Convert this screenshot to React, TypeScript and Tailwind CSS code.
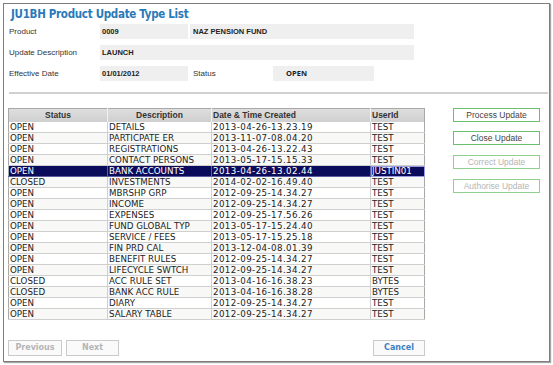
import React from "react";

type Row = { status: string; desc: string; date: string; user: string; selected?: boolean };

const rows: Row[] = [
  { status: "OPEN", desc: "DETAILS", date: "2013-04-26-13.23.19", user: "TEST" },
  { status: "OPEN", desc: "PARTICPATE ER", date: "2013-11-07-08.04.20", user: "TEST" },
  { status: "OPEN", desc: "REGISTRATIONS", date: "2013-04-26-13.22.43", user: "TEST" },
  { status: "OPEN", desc: "CONTACT PERSONS", date: "2013-05-17-15.15.33", user: "TEST" },
  { status: "OPEN", desc: "BANK ACCOUNTS", date: "2013-04-26-13.02.44", user: "JUSTIN01", selected: true },
  { status: "CLOSED", desc: "INVESTMENTS", date: "2014-02-02-16.49.40", user: "TEST" },
  { status: "OPEN", desc: "MBRSHP GRP", date: "2012-09-25-14.34.27", user: "TEST" },
  { status: "OPEN", desc: "INCOME", date: "2012-09-25-14.34.27", user: "TEST" },
  { status: "OPEN", desc: "EXPENSES", date: "2012-09-25-17.56.26", user: "TEST" },
  { status: "OPEN", desc: "FUND GLOBAL TYP", date: "2013-05-17-15.24.40", user: "TEST" },
  { status: "OPEN", desc: "SERVICE / FEES", date: "2013-05-17-15.25.18", user: "TEST" },
  { status: "OPEN", desc: "FIN PRD CAL", date: "2013-12-04-08.01.39", user: "TEST" },
  { status: "OPEN", desc: "BENEFIT RULES", date: "2012-09-25-14.34.27", user: "TEST" },
  { status: "OPEN", desc: "LIFECYCLE SWTCH", date: "2012-09-25-14.34.27", user: "TEST" },
  { status: "CLOSED", desc: "ACC RULE SET", date: "2013-04-16-16.38.23", user: "BYTES" },
  { status: "CLOSED", desc: "BANK ACC RULE", date: "2013-04-16-16.38.28", user: "BYTES" },
  { status: "OPEN", desc: "DIARY", date: "2012-09-25-14.34.27", user: "TEST" },
  { status: "OPEN", desc: "SALARY TABLE", date: "2012-09-25-14.34.27", user: "TEST" },
];

function SideButton({ label, disabled }: { label: string; disabled?: boolean }) {
  return (
    <div
      className={
        "w-[87px] h-[14px] flex items-center justify-center border bg-white font-['Liberation_Sans',sans-serif] text-[8.5px] " +
        (disabled ? "border-[#8fd08f] text-[#b5b5b5]" : "border-[#6cbf6c] text-[#444]")
      }
    >
      {label}
    </div>
  );
}

export default function App() {
  return (
    <div className="w-[553px] h-[365px] bg-white pt-[3px] pl-[3px]">
      <div className="w-[547px] h-[359px] border border-[#7d7d7d] shadow-[1px_1px_1px_rgba(0,0,0,0.35)] flex flex-col">
        {/* Title */}
        <div className="pl-[7px] pt-[2px] h-[18px] leading-[16px] text-[11.5px] font-bold text-[#2a7ab9] font-['DejaVu_Sans',sans-serif] [font-stretch:condensed] tracking-[-0.3px]">
          JU1BH Product Update Type List
        </div>

        {/* Form */}
        <div className="mt-[2px] flex flex-col gap-[6px] font-['Liberation_Sans',sans-serif] text-[8px] text-[#333]">
          <div className="flex h-[15px] items-center">
            <div className="pl-[5px] w-[96px]">Product</div>
            <div className="w-[88px] h-full bg-[#efefef] flex items-center pl-[2px] font-bold text-[7.5px] text-[#222]">0009</div>
            <div className="ml-[2px] w-[224px] h-full bg-[#efefef] flex items-center pl-[3px] font-bold text-[7.5px] text-[#222]">NAZ PENSION FUND</div>
          </div>
          <div className="flex h-[15px] items-center">
            <div className="pl-[5px] w-[96px]">Update Description</div>
            <div className="w-[314px] h-full bg-[#efefef] flex items-center pl-[2px] font-bold text-[7.5px] text-[#222]">LAUNCH</div>
          </div>
          <div className="flex h-[15px] items-center">
            <div className="pl-[5px] w-[96px]">Effective Date</div>
            <div className="w-[88px] h-full bg-[#efefef] flex items-center pl-[2px] font-bold text-[7.5px] text-[#222]">01/01/2012</div>
            <div className="pl-[5px] w-[85px]">Status</div>
            <div className="w-[101px] h-full bg-[#efefef] flex items-center pl-[13px] font-bold text-[7.5px] text-[#222] font-['Open_Sans',sans-serif]">OPEN</div>
          </div>
        </div>

        {/* Separator */}
        <div className="mt-[11px] ml-[5px] mr-[1px] h-[2px] bg-[#d0d0d0]" />

        {/* Main */}
        <div className="mt-[14px] flex">
          <table className="ml-[4px] w-[416px] table-fixed border-collapse border border-[#a8a8a8] font-['DejaVu_Sans',sans-serif] text-[8.7px] text-[#222]">
            <colgroup>
              <col className="w-[99px]" />
              <col className="w-[104px]" />
              <col className="w-[159px]" />
              <col className="w-[54px]" />
            </colgroup>
            <thead>
              <tr className="h-[13px] bg-gradient-to-b from-[#dedede] to-[#cfcfcf] font-['Liberation_Sans',sans-serif] text-[8.5px] font-bold text-[#333]">
                <th className="p-0 text-center border-r border-[#f0f0f0] leading-[12px]">Status</th>
                <th className="p-0 text-center border-r border-[#f0f0f0] leading-[12px]">Description</th>
                <th className="p-0 pl-[1px] text-left border-r border-[#f0f0f0] leading-[12px]">Date &amp; Time Created</th>
                <th className="p-0 pl-[1px] text-left leading-[12px]">UserId</th>
              </tr>
            </thead>
            <tbody>
              {rows.map((r, i) => (
                <tr
                  key={i}
                  className={
                    "h-[11px] " +
                    (r.selected ? "bg-[#0b0b5c] text-white" : i % 2 === 0 ? "bg-white" : "bg-[#f8f8f6]")
                  }
                >
                  <td className={"p-0 pl-[1px] leading-[10px] whitespace-nowrap overflow-hidden border-b border-r " + (r.selected ? "border-[#5c5ca0]" : "border-[#cfcfcf]")}>{r.status}</td>
                  <td className={"p-0 pl-[1px] leading-[10px] whitespace-nowrap overflow-hidden border-b border-r " + (r.selected ? "border-[#5c5ca0]" : "border-[#cfcfcf]")}>{r.desc}</td>
                  <td className={"p-0 pl-[1px] leading-[10px] tracking-[0.4px] whitespace-nowrap overflow-hidden border-b border-r " + (r.selected ? "border-[#5c5ca0]" : "border-[#cfcfcf]")}>{r.date}</td>
                  <td className={"p-0 pl-[1px] leading-[10px] whitespace-nowrap overflow-hidden border-b " + (r.selected ? "border-[#8a8ad0] outline outline-1 outline-[#9a9ae0] -outline-offset-1" : "border-[#cfcfcf]")}>{r.user}</td>
                </tr>
              ))}
            </tbody>
          </table>

          <div className="ml-[28px] flex flex-col">
            <SideButton label="Process Update" />
            <div className="mt-[9px]">
              <SideButton label="Close Update" />
            </div>
            <div className="mt-[10px]">
              <SideButton label="Correct Update" disabled />
            </div>
            <div className="mt-[10px]">
              <SideButton label="Authorise Update" disabled />
            </div>
          </div>
        </div>

        {/* Bottom buttons */}
        <div className="mt-[20px] ml-[4px] flex font-['DejaVu_Sans',sans-serif] text-[8px] font-bold">
          <div className="w-[54px] h-[16px] flex items-center justify-center border border-[#cacaca] bg-[#fafafa] text-[#b5b5b5]">Previous</div>
          <div className="ml-[4px] w-[53px] h-[16px] flex items-center justify-center border border-[#cacaca] bg-[#fafafa] text-[#b5b5b5]">Next</div>
          <div className="ml-[254px] w-[52px] h-[16px] flex items-center justify-center border border-[#cacaca] bg-[#fafafa] text-[#3b82c4]">Cancel</div>
        </div>
      </div>
    </div>
  );
}
